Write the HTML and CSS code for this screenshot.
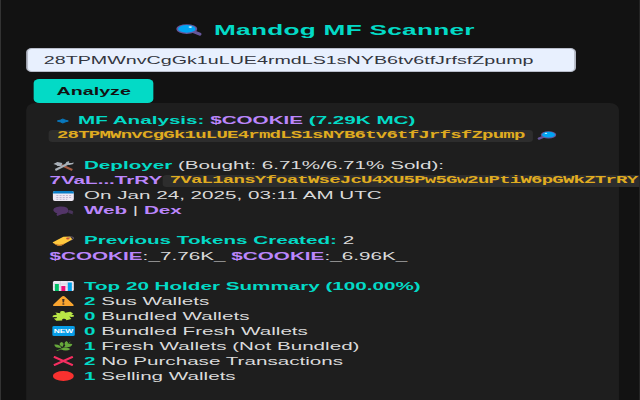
FILE: index.html
```html
<!DOCTYPE html>
<html lang="en">
<head>
<meta charset="utf-8">
<title>Mandog MF Scanner</title>
<link rel="stylesheet" href="styles.css">
</head>
<body>
<svg class="defs" aria-hidden="true">
  <symbol id="lens" viewBox="0 0 27 13" preserveAspectRatio="none">
    <path d="M17 8l7 3" stroke="#66569b" stroke-width="3.4" stroke-linecap="round"/>
    <ellipse cx="11" cy="5.5" rx="10.5" ry="5.3" fill="#66569b"/>
    <ellipse cx="11" cy="5.3" rx="8.8" ry="4.1" fill="#00a5f4"/>
    <ellipse cx="14.5" cy="3.3" rx="1.8" ry=".9" fill="#d5f2ff"/>
  </symbol>
</svg>
<main class="stage">
  <h1 class="title"><svg class="title-icon"><use href="#lens"/></svg><span>Mandog MF Scanner</span></h1>
  <div class="field">28TPMWnvCgGk1uLUE4rmdLS1sNYB6tv6tfJrfsfZpump</div>
  <button class="analyze">Analyze</button>
  <section class="panel">
    <div class="row"><svg class="icon" viewBox="0 0 22 10" preserveAspectRatio="none"><path d="M5 5Q9 4 10.500 3Q12 4 16 5Q12 6 10.500 7Q9 6 5 5z" fill="#0878be" stroke="#0878be" stroke-linejoin="round"/></svg><span class="first"><b>MF Analysis: <i>$COOKIE</i> (7.29K MC)</b></span></div>
    <div class="row"><code>28TPMWnvCgGk1uLUE4rmdLS1sNYB6tv6tfJrfsfZpump</code><svg class="lens-small" viewBox="0 0 27 13" preserveAspectRatio="none"><use href="#lens" width="27" height="13"/></svg></div>
    <div class="row"></div>
    <div class="row"><svg class="icon" viewBox="0 0 22 10" preserveAspectRatio="none"><path d="M9 4l11 5" stroke="#a65b43" stroke-width="2.200"/><path d="M3 9L17 2" stroke="#a9b0b8" stroke-width="2"/><path d="M1 3l4-2 5 1-1 3-4 0-1-1zM14 1l3-1-1 2 4 0 1-1 0 2-4 1-4-1z" fill="#a9b0b8"/></svg><span><b>Deployer</b> (Bought: 6.71%/6.71% Sold):</span></div>
    <div class="row wallet"><i>7VaL...TrRY</i><code>7VaL1ansYfoatWseJcU4XU5Pw5Gw2uPtiW6pGWkZTrRY</code></div>
    <div class="row"><svg class="icon" viewBox="0 0 22 10" preserveAspectRatio="none"><rect x=".5" width="21" height="10" rx="2" fill="#eee9f4"/><path d="M.5 2.500V1.500Q.5 0 2.500 0h17q2 0 2 1.500v1z" fill="#087dc5"/><path d="M4 4.500h15M4 6.500h15M4 8.300h11" stroke="#b9b0cc" stroke-width=".9" stroke-dasharray="2 1.200"/></svg><span>On Jan 24, 2025, 03:11 AM UTC</span></div>
    <div class="row"><svg class="icon" viewBox="0 0 22 10" preserveAspectRatio="none"><path d="M2 2Q5 0 9 .5q7 0 7 4 0 3.500-6 3.500L5 10l-1-1.500 1-1Q-1 5 2 2z" fill="#533568"/><path d="M16 4q5 0 5 2.500L20 7l1 1.500L16 7z" fill="#49345b"/></svg><span><i>Web</i> | <i>Dex</i></span></div>
    <div class="row"></div>
    <div class="row"><svg class="icon" viewBox="0 0 22 10" preserveAspectRatio="none"><path d="M0 6.500L11 .7l7-.2 2 3L9 9.500H5z" fill="#ffc93e"/><path d="M1 7.500L6 10l4-.7 3-2-6 1.500z" fill="#c8782c"/><ellipse cx="15.500" cy="2.500" rx="1.700" ry=".9" fill="#c74b35"/><path d="M16 2q4-2 5-.5T19 4" fill="none" stroke="#89758e" stroke-width=".7"/></svg><span><b>Previous Tokens Created:</b> 2</span></div>
    <div class="row tokens"><span><i>$COOKIE</i>:_7.76K_ <i>$COOKIE</i>:_6.96K_</span></div>
    <div class="row"></div>
    <div class="row"><svg class="icon" viewBox="0 0 22 10" preserveAspectRatio="none"><rect x=".5" width="21" height="10" rx="1.500" fill="#ece8f2"/><path d="M1 3h20M1 6h20M8 0v10M15 0v10" stroke="#c9c1d6" stroke-width=".5"/><path d="M2.500 3h4v7h-4z" fill="#00bf65"/><path d="M9 5h4v5H9z" fill="#f20c78"/><path d="M15.500 1.500h4V10h-4z" fill="#00a2ec"/></svg><span><b>Top 20 Holder Summary (100.00%)</b></span></div>
    <div class="row"><svg class="icon" viewBox="0 0 22 10" preserveAspectRatio="none"><path d="M11 0Q12 0 13 1L21 8.500Q22 10 20 10H2Q0 10 1 8.500L9 1Q10 0 11 0z" fill="#faa52f"/><path d="M9.800 3h2.400l-.5 3.500h-1.400z" fill="#463329"/><ellipse cx="11" cy="8" rx="1.200" ry=".8" fill="#463329"/></svg><span><b>2</b> Sus Wallets</span></div>
    <div class="row"><svg class="icon" viewBox="0 0 22 10" preserveAspectRatio="none"><path d="M3 1.500l5 .8Q7 0 10 0q3 0 2.500 1.800L18 .8l3 1.700q-3 .7-1 1.300 2.500.5 1.500 1.700-2 .8-4.500 0l2 2.500-5 1.300q0-2-3-1.500-2 .5-1 1.700L4 9.800 1.500 7.500q4-.2 3-1.200-2-.8-4.300 0-.7-2 2.300-2.300 2-.2 2-.7z" fill="#b9e646"/></svg><span><b>0</b> Bundled Wallets</span></div>
    <div class="row"><span class="icon new"><span>NEW</span></span><span><b>0</b> Bundled Fresh Wallets</span></div>
    <div class="row"><svg class="icon" viewBox="0 0 22 10" preserveAspectRatio="none"><path d="M4 10Q12 8 18 1" stroke="#477f2d" fill="none"/><path d="M9 7Q2 7 2 3.500 8 3 9 7zM10 6Q5 3 9 1q4 1 1 5zM13 5q-2-3 1-5 4 2-1 5zM12 6q2-4 8-3-1 4-8 3zM8 8q6-3 10 0-4 3-10 0z" fill="#67a83b"/></svg><span><b>1</b> Fresh Wallets (Not Bundled)</span></div>
    <div class="row"><svg class="icon" viewBox="0 0 22 10" preserveAspectRatio="none"><path d="M1.500 .8L20.500 9.200M20.500 .8L1.500 9.200" stroke="#f52e60" stroke-width="2.200"/></svg><span><b>2</b> No Purchase Transactions</span></div>
    <div class="row"><svg class="icon" viewBox="0 0 22 10" preserveAspectRatio="none"><ellipse cx="11" cy="5" rx="10.500" ry="5" fill="#f8312f"/></svg><span><b>1</b> Selling Wallets</span></div>
  </section>
</main>
</body>
</html>
```
FILE: styles.css
```css
:root { --sx: 1.87; }
* { box-sizing: border-box; }
html, body { margin: 0; width: 640px; height: 400px; overflow: hidden; background: #121212; }
.defs { display: none; }
/* The page uses expanded type: horizontal sizes are divided by the stretch. */
.stage {
  width: calc(640px / var(--sx));
  height: 400px;
  padding: 20px 0 0 calc(27px / var(--sx));
  overflow: hidden;
  transform: scaleX(var(--sx));
  transform-origin: 0 0;
  background: linear-gradient(90deg, #333 .5px, transparent .5px calc(100% - .5px), #333 calc(100% - .5px));
  color: #dadada;
  font: 11.04px/15.06px "Liberation Sans", Arial, sans-serif;
  white-space: nowrap;
}
.title {
  display: flex;
  height: 28px;
  margin: 0;
  padding: 1.5px 0 0 calc(148px / var(--sx));
  color: #03dac6;
  font-size: 14px;
  letter-spacing: .15px;
  line-height: 16px;
}
.title-icon { width: calc(27px / var(--sx)); height: 12px; margin: 2px calc(12px / var(--sx)) 0 0; }
.field {
  width: calc(549px / var(--sx));
  height: 24px;
  padding-left: calc(15px / var(--sx));
  border: .7px solid #b8bdca;
  border-radius: 3px / 4px;
  background: #e8f0fe;
  color: #333640;
  font-size: 10.53px;
  line-height: 22px;
}
.analyze {
  display: block;
  width: calc(119.5px / var(--sx));
  height: 24px;
  margin: 7px 0 0 calc(7px / var(--sx));
  padding: 0;
  border: 0;
  border-radius: 3px / 4px;
  background: #03dac6;
  color: #121212;
  font: bold 10.5px/22px "Liberation Sans", Arial, sans-serif;
}
.panel {
  width: calc(591.5px / var(--sx));
  height: 310px;
  margin-top: -.5px;
  padding: 10.6px 0 0 calc(22.5px / var(--sx));
  border-radius: 5px / 7px;
  background: #1e1e1e;
}
.row { display: flex; align-items: center; height: 15.06px; }
.icon { flex: none; width: calc(22px / var(--sx)); height: 10px; margin: 0 calc(9.5px / var(--sx)) 0 calc(3px / var(--sx)); }
.first { margin-left: calc(-6px / var(--sx)); }
b { color: #03dac6; }
i { color: #bb86fc; font-style: normal; font-weight: bold; }
code {
  height: 12px;
  padding: 0 calc(7.5px / var(--sx));
  border-radius: 2px / 3px;
  background: #2d2d2d;
  color: #e0ac20;
  font: bold 10.2px/11px "Liberation Mono", monospace;
  letter-spacing: -.43px;
}
.tokens { letter-spacing: .02px; }
.lens-small { width: calc(20px / var(--sx)); height: 9px; margin-left: calc(4px / var(--sx)); transform: scaleX(-1); }
.new { display: grid; place-items: center; border-radius: 1px; background: #079de8; }
.new span { color: #fff; font: bold 4.5px/5px "Liberation Sans", Arial, sans-serif; }
```
